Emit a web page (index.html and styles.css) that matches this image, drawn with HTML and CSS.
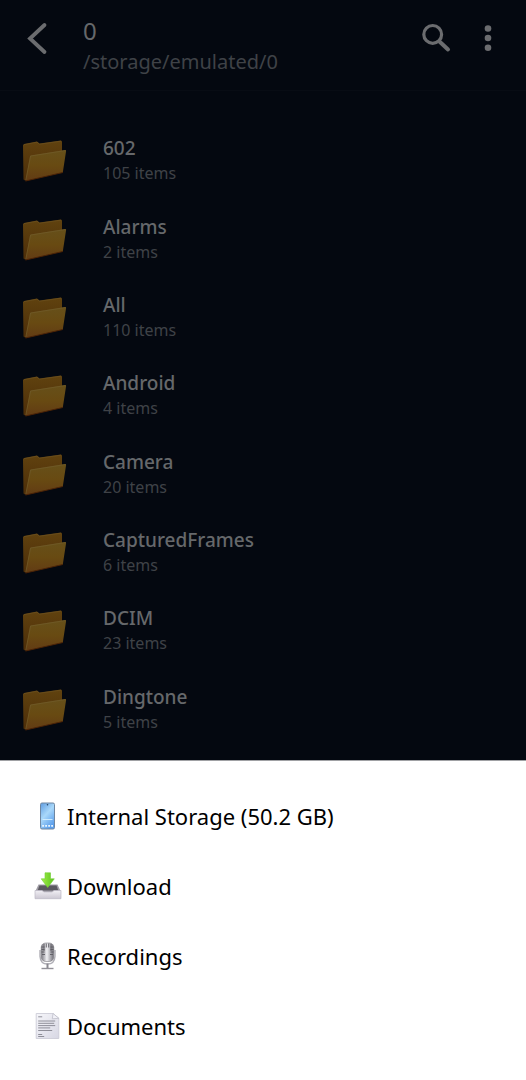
FILE: index.html
```html
<!DOCTYPE html>
<html lang="en">
<head>
<meta charset="utf-8">
<meta name="viewport" content="width=device-width, initial-scale=1">
<title>/storage/emulated/0</title>
<link rel="stylesheet" href="styles.css">
</head>
<body>
<svg class="defs" width="0" height="0" aria-hidden="true">
  <defs>
    <linearGradient id="back" x1="0" y1="0" x2="0" y2="1"><stop offset="0" stop-color="#60420f"/><stop offset="1" stop-color="#4d2d08"/></linearGradient>
    <linearGradient id="front" x1="0" y1="0" x2="0" y2="1"><stop offset="0" stop-color="#66501a"/><stop offset=".5" stop-color="#684a12"/><stop offset="1" stop-color="#623b14"/></linearGradient>
    <symbol id="folder" viewBox="0 0 44 44">
      <path d="M0 7 1 6 14 3.500 16.500 5.500 38 2.500 39 3.500V32L2 42.500.500 41.500Z" fill="url(#back)"/>
      <path d="M1 6.700 14 4.200 16.500 6.200 38 3.200" fill="none" stroke="#6b501f" stroke-width=".7"/>
      <path d="M8 17.500 42.300 12Q43.300 12 43.100 13L39.800 34.500 2.500 43 7 18.500Q7.200 17.700 8 17.500Z" fill="url(#front)"/>
      <path d="M2.800 42 7.600 18 42.500 12.500" fill="none" stroke="#715b2b" stroke-width=".7"/>
      <path d="M2.500 43 39.800 34.500" stroke="#4c2306" stroke-width="1"/>
    </symbol>
  </defs>
</svg>
<div class="screen">
  <header class="topbar">
    <button class="icon-button" type="button" aria-label="Back">
      <svg width="30" height="36" viewBox="0 0 30 36"><path d="M21.500 5 7 18.500 21.500 32" fill="none" stroke="currentColor" stroke-width="3.800" stroke-linecap="round"/></svg>
    </button>
    <div class="heading">
      <h1 class="title">0</h1>
      <p class="path">/storage/emulated/0</p>
    </div>
    <div class="actions">
      <button class="icon-button" type="button" aria-label="Search">
        <svg width="32" height="32" viewBox="0 0 32 32" fill="none" stroke="currentColor"><circle cx="12.700" cy="12.400" r="8.900" stroke-width="3.200"/><path d="m20 20 8 7.500" stroke-width="4" stroke-linecap="round"/></svg>
      </button>
      <button class="icon-button" type="button" aria-label="More options">
        <svg width="32" height="32" viewBox="0 0 32 32" fill="currentColor"><circle cx="16" cy="6.500" r="3.300"/><circle cx="16" cy="16" r="3.300"/><circle cx="16" cy="25.800" r="3.300"/></svg>
      </button>
    </div>
  </header>
  <ul class="folders">
    <li class="folder"><svg class="folder-icon"><use href="#folder"/></svg><div><h2 class="name">602</h2><p class="count">105 items</p></div></li>
    <li class="folder"><svg class="folder-icon"><use href="#folder"/></svg><div><h2 class="name">Alarms</h2><p class="count">2 items</p></div></li>
    <li class="folder"><svg class="folder-icon"><use href="#folder"/></svg><div><h2 class="name">All</h2><p class="count">110 items</p></div></li>
    <li class="folder"><svg class="folder-icon"><use href="#folder"/></svg><div><h2 class="name">Android</h2><p class="count">4 items</p></div></li>
    <li class="folder"><svg class="folder-icon"><use href="#folder"/></svg><div><h2 class="name">Camera</h2><p class="count">20 items</p></div></li>
    <li class="folder"><svg class="folder-icon"><use href="#folder"/></svg><div><h2 class="name">CapturedFrames</h2><p class="count">6 items</p></div></li>
    <li class="folder"><svg class="folder-icon"><use href="#folder"/></svg><div><h2 class="name">DCIM</h2><p class="count">23 items</p></div></li>
    <li class="folder"><svg class="folder-icon"><use href="#folder"/></svg><div><h2 class="name">Dingtone</h2><p class="count">5 items</p></div></li>
  </ul>
  <nav class="sheet" aria-label="Locations">
    <button class="place" type="button">
      <svg class="place-icon" viewBox="0 0 28 28">
        <defs><linearGradient id="glass" x1="0" y1="0" x2=".6" y2="1"><stop offset="0" stop-color="#5d9be0"/><stop offset=".5" stop-color="#a9d8fa"/><stop offset="1" stop-color="#5c9fec"/></linearGradient></defs>
        <rect x="6.500" y="1" width="14" height="26" rx="1.500" fill="url(#glass)" stroke="#6f86a0"/>
        <circle cx="13.500" cy="2.800" r=".8" fill="#24415f"/>
        <path d="M8.500 17.500h10" stroke="#d5efff" stroke-width=".9"/>
        <path d="M8.200 23.800h10.800" stroke="#e9f6ff" stroke-width="1.800" stroke-dasharray="1.800 1.200"/>
      </svg>
      <span>Internal Storage (50.2 GB)</span>
    </button>
    <button class="place" type="button">
      <svg class="place-icon" viewBox="0 0 28 28">
        <defs><linearGradient id="tray" x1="0" y1="0" x2="0" y2="1"><stop offset="0" stop-color="#f1eff4"/><stop offset="1" stop-color="#cbc7d2"/></linearGradient>
        <linearGradient id="arrow" x1="0" y1="0" x2="1" y2="0"><stop offset="0" stop-color="#a4ee4c"/><stop offset="1" stop-color="#58c31a"/></linearGradient></defs>
        <path d="M4.500 12.500h19L27 20H1Z" fill="#a09da6"/>
        <path d="M5.500 13.500h17l1.800 5H3.700Z" fill="#5b5960"/>
        <path d="M1 18.500h7l2 1.500h8l2-1.500h7V26.700H1Z" fill="url(#tray)" stroke="#bcb8c4" stroke-width=".7"/>
        <path d="M11 .8h5.500v6h3.800L13.700 15.500 7.200 6.800H11Z" fill="url(#arrow)" stroke="#70cc33" stroke-width=".6"/>
      </svg>
      <span>Download</span>
    </button>
    <button class="place" type="button">
      <svg class="place-icon" viewBox="0 0 28 28">
        <defs><linearGradient id="mic" x1="0" y1="0" x2="1" y2="0"><stop offset="0" stop-color="#77767d"/><stop offset=".45" stop-color="#f2f2f5"/><stop offset="1" stop-color="#6d6c74"/></linearGradient></defs>
        <path d="M6 8v6.500Q6.500 22 13.500 22t7.500-7.500V8" fill="none" stroke="#b0afb6" stroke-width="1.400"/>
        <rect x="7.200" y="1" width="12.600" height="18.500" rx="4.500" fill="url(#mic)" stroke="#7d7c83" stroke-width=".6"/>
        <path d="M10 2v7M12.300 1.500v4M14.700 1.500v4M17 2v7M7.500 5h3M16.500 5h3M7.500 7.500h3M16.500 7.500h3M7.500 10h3M16.500 10h3M8 12.500h3M16 12.500h3" stroke="#5b5a61" stroke-width=".9"/>
        <path d="M13.500 21.500v4.500" stroke="#8a8990" stroke-width="2"/>
        <path d="M7.500 26.500h12" stroke="#929198" stroke-width="1.400"/>
      </svg>
      <span>Recordings</span>
    </button>
    <button class="place" type="button">
      <svg class="place-icon" viewBox="0 0 28 28">
        <defs><linearGradient id="paper" x1="0" y1="0" x2="1" y2="1"><stop offset="0" stop-color="#f6f6fa"/><stop offset="1" stop-color="#d7d7e3"/></linearGradient></defs>
        <path d="M2.200 1.500h16.800l5.800 4.800V26.500H2.200Z" fill="url(#paper)" stroke="#c8c8d3" stroke-width=".8"/>
        <path d="M19 1.500 18.300 6.800 24.800 6.300Z" fill="#f2f2f8" stroke="#b9b9c4" stroke-width=".7"/>
        <path d="M4.200 4.800h4M4.200 9h17M4.200 11.300h16M4.200 13.600h17M4.200 15.900h12M4.200 18.500h14M4.200 22.500h4M4.200 24.500h6" stroke="#85858f" stroke-width=".9"/>
      </svg>
      <span>Documents</span>
    </button>
  </nav>
</div>
</body>
</html>
```
FILE: styles.css
```css
* { box-sizing: border-box; }
body {
  margin: 0;
  background: #040810;
  color: #66686b;
  font-family: "Noto Sans", sans-serif;
}
h1, h2, p, ul { margin: 0; padding: 0; }
button {
  border: 0;
  padding: 0;
  background: none;
  color: inherit;
  font: inherit;
}
svg { display: block; flex: none; }
.defs { position: absolute; }
.screen {
  display: flex;
  flex-direction: column;
  min-height: 100vh;
}
.topbar {
  display: flex;
  align-items: flex-start;
  padding: 16px 22px 12px 23px;
  border-bottom: 1px solid #080c14;
}
.icon-button { padding: 6px 0; color: #6b6c6f; }
.topbar > .icon-button { padding: 4px 0; }
.heading { flex: 1; margin-left: 30px; }
.title { font-size: 24px; line-height: 30px; font-weight: 400; }
.path { font-size: 20px; line-height: 32px; color: #3f4247; }
.actions { display: flex; gap: 20px; }
.folders {
  flex: 1;
  display: grid;
  grid-auto-rows: minmax(64px, 1fr);
  padding: 30px 23px 12px;
  list-style: none;
}
.folder { display: flex; align-items: center; gap: 36px; }
.folder-icon { width: 44px; height: 44px; }
.name { font-size: 19px; line-height: 26px; font-weight: 500; }
.count { font-size: 16px; line-height: 24px; color: #3f4247; }
.sheet {
  display: flex;
  flex-direction: column;
  padding: 20px 0 19px;
  border-top: 1px solid #a0a1a4;
  background: #fff;
  color: #000;
}
.place {
  display: flex;
  align-items: center;
  gap: 5px;
  height: 70px;
  padding: 0 34px;
  font-size: 22px;
  line-height: 30px;
  text-align: left;
}
.place-icon { width: 28px; height: 28px; }
```
